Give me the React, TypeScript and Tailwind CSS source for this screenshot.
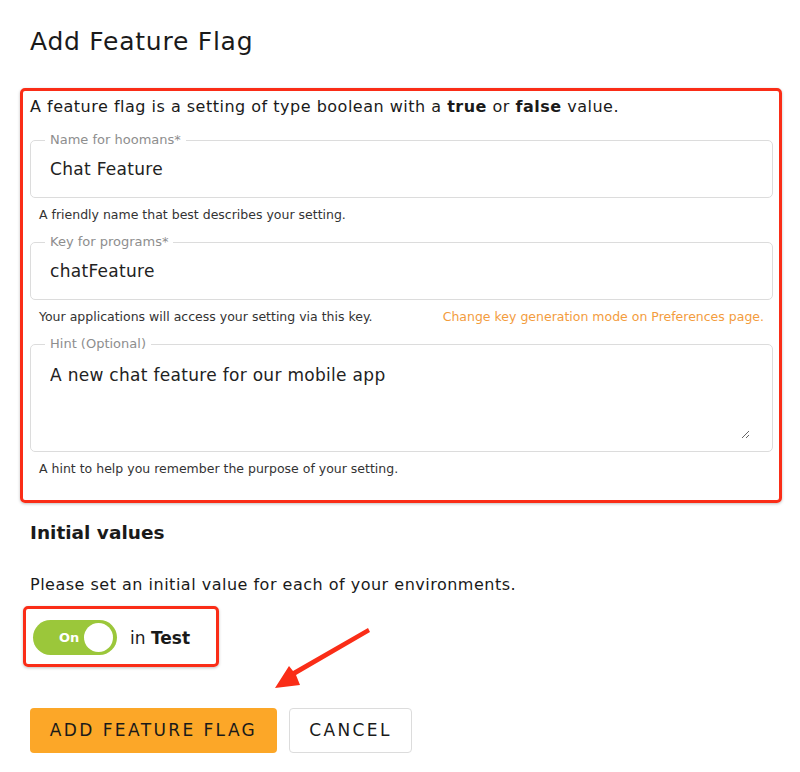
import { ReactNode } from "react";

const font = { fontFamily: '"DejaVu Sans", sans-serif' };

function Field({ label, children }: { label: string; children: ReactNode }) {
  return (
    <fieldset className="border border-[#dcdcdc] rounded-[5px] pl-[14px] pr-[14px]">
      <legend className="px-[5px] text-[13px] leading-[16px] text-[#8e8e8e]">{label}</legend>
      <div className="pl-[5px]">{children}</div>
    </fieldset>
  );
}

function Helper({ children, right }: { children: ReactNode; right?: ReactNode }) {
  return (
    <div className="flex justify-between px-[9px] mt-[9px] text-[12.5px] leading-[16px] text-[#333]">
      <span>{children}</span>
      {right && <span className="text-[#f39c3d]">{right}</span>}
    </div>
  );
}

export default function App() {
  return (
    <div style={font} className="relative w-[800px] h-[772px] bg-white text-[#1a1a1a] pl-[30px] pr-[27px] pt-[26px]">
      <h1 className="text-[25px] leading-[32px] font-normal tracking-[0.75px]">Add Feature Flag</h1>

      <div className="mt-[30px] -ml-[10px] -mr-[9px] border-[3px] border-[#fa2d17] rounded-[5px] pl-[7px] pr-[6px] pt-[4px] pb-[23px] shadow-[0_1px_3px_rgba(0,0,0,0.25)]">
        <p className="text-[16px] leading-[24px] tracking-[0.5px]">
          A feature flag is a setting of type boolean with a <b>true</b> or <b>false</b> value.
        </p>

        <div className="mt-[13px]">
          <Field label="Name for hoomans*">
            <div className="h-[49px] pt-[10px] text-[17px] leading-[22px] tracking-[0.3px] text-[#222]">Chat Feature</div>
          </Field>
          <Helper>A friendly name that best describes your setting.</Helper>
        </div>

        <div className="mt-[11px]">
          <Field label="Key for programs*">
            <div className="h-[49px] pt-[10px] text-[17px] leading-[22px] tracking-[0.3px] text-[#222]">chatFeature</div>
          </Field>
          <Helper right="Change key generation mode on Preferences page.">
            Your applications will access your setting via this key.
          </Helper>
        </div>

        <div className="mt-[11px]">
          <Field label="Hint (Optional)">
            <textarea
              readOnly
              defaultValue="A new chat feature for our mobile app"
              className="block w-[calc(100%-8px)] h-[75px] mt-[12px] mb-[12px] resize-y outline-none text-[17px] leading-[22px] tracking-[0.3px] text-[#222]"
              style={font}
            />
          </Field>
          <Helper>A hint to help you remember the purpose of your setting.</Helper>
        </div>
      </div>

      <h2 className="mt-[16px] text-[18.5px] leading-[28px] font-bold">Initial values</h2>
      <p className="mt-[26px] text-[16px] leading-[24px] tracking-[0.5px]">
        Please set an initial value for each of your environments.
      </p>

      <div className="mt-[9px] -ml-[7px] inline-flex items-center gap-[13px] border-[3px] border-[#fa2d17] rounded-[5px] pl-[7px] pr-[26px] pt-[11px] pb-[9px] shadow-[0_1px_3px_rgba(0,0,0,0.25)]">
        <div className="w-[84px] h-[35px] rounded-full bg-[#9bc73a] flex items-center justify-between pl-[26px] pr-[4px]">
          <span className="text-white text-[13px] font-bold">On</span>
          <span className="w-[29px] h-[29px] rounded-full bg-white" />
        </div>
        <span className="text-[17px] leading-[24px]">
          in <b>Test</b>
        </span>
      </div>

      <div className="mt-[41px] flex gap-[12px]">
        <button className="w-[247px] h-[45px] rounded-[4px] bg-[#fca728] text-[17px] tracking-[2.4px] text-[#1a1a1a]" style={font}>
          ADD FEATURE FLAG
        </button>
        <button className="w-[123px] h-[45px] rounded-[4px] bg-white border border-[#dcdcdc] text-[17px] tracking-[2.4px] text-[#1a1a1a]" style={font}>
          CANCEL
        </button>
      </div>

      <svg className="absolute left-[270px] top-[622px]" width="104" height="72" viewBox="0 0 104 72">
        <polygon points="98,6 100,10 26,53 30,63 5,66 19,44 23,49" fill="#fa2d17" />
      </svg>
    </div>
  );
}
